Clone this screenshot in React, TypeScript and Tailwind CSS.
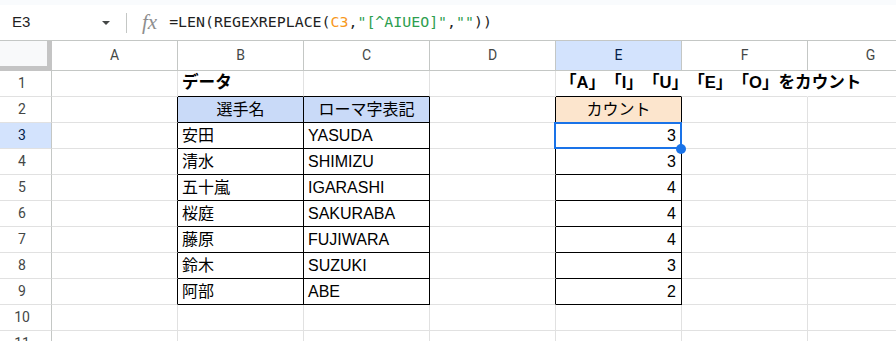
import React from 'react';

const COLS = ['A', 'B', 'C', 'D', 'E', 'F', 'G'];

type Cell = {
  text?: string;
  bold?: boolean;
  align?: 'left' | 'center' | 'right';
  fill?: string;
};

const players: [string, string, string][] = [
  ['安田', 'YASUDA', '3'],
  ['清水', 'SHIMIZU', '3'],
  ['五十嵐', 'IGARASHI', '4'],
  ['桜庭', 'SAKURABA', '4'],
  ['藤原', 'FUJIWARA', '4'],
  ['鈴木', 'SUZUKI', '3'],
  ['阿部', 'ABE', '2'],
];

const rows: Cell[][] = [
  [{}, { text: 'データ', bold: true }, {}, {}, { text: '「A」「I」「U」「E」「O」をカウント', bold: true }, {}, {}],
  [
    {},
    { text: '選手名', align: 'center', fill: 'bg-[#c9daf8]' },
    { text: 'ローマ字表記', align: 'center', fill: 'bg-[#c9daf8]' },
    {},
    { text: 'カウント', align: 'center', fill: 'bg-[#fce5cd]' },
    {},
    {},
  ],
  ...players.map(([name, roman, n]) => [
    {},
    { text: name },
    { text: roman },
    {},
    { text: n, align: 'right' as const },
    {},
    {},
  ]),
  [{}, {}, {}, {}, {}, {}, {}],
  [{}, {}, {}, {}, {}, {}, {}],
];

const inTable = (r: number, c: number) => r >= 2 && r <= 9 && (c === 1 || c === 2 || c === 4);

function borderClasses(r: number, c: number) {
  let right = 'border-r-[#e1e1e1]';
  if (inTable(r, c) || inTable(r, c + 1)) right = 'border-r-black';
  else if (r === 1 && (c === 4 || c === 5)) right = 'border-r-transparent';
  const bottom = inTable(r, c) || inTable(r + 1, c) ? 'border-b-black' : 'border-b-[#e1e1e1]';
  return `${right} ${bottom}`;
}

const alignClass = {
  left: 'justify-start pl-[4px]',
  center: 'justify-center',
  right: 'justify-end pr-[5px]',
};

export default function App() {
  return (
    <div className="w-[896px] h-[341px] overflow-hidden bg-white font-['Liberation_Sans','Noto_Sans_CJK_JP',sans-serif] [text-spacing-trim:space-all]">
      <div className="h-[5px] bg-[#f9fbfd]" />

      {/* formula bar */}
      <div className="flex h-[36px] items-center border-b border-[#c4c7c5]">
        <div className="flex w-[126px] items-center justify-between pl-[12px] pr-[16px]">
          <span className="text-[15px] text-[#1f1f1f]">E3</span>
          <svg width="8" height="4" viewBox="0 0 8 4">
            <path d="M0 0h8L4 4z" fill="#444746" />
          </svg>
        </div>
        <div className="h-[20px] w-px bg-[#c4c7c5]" />
        <span className="ml-[15px] font-['Liberation_Serif',serif] text-[21px] italic leading-none text-[#8e8e8e]">
          fx
        </span>
        <span className="ml-[12px] whitespace-nowrap font-['DejaVu_Sans_Mono',monospace] text-[14.9px] text-[#1f1f1f]">
          =LEN(REGEXREPLACE(<span className="text-[#f7981d]">C3</span>,
          <span className="text-[#2e9e4f]">"[^AIUEO]"</span>,
          <span className="text-[#2e9e4f]">""</span>))
        </span>
      </div>

      {/* column headers */}
      <div className="flex h-[30px] font-['Roboto',sans-serif] text-[14px] text-[#444746]">
        <div className="w-[52px] shrink-0 border-r-[5px] border-b-[5px] border-[#c4c4c4] bg-[#f8f9fa]" />
        {COLS.map((c) => (
          <div
            key={c}
            className={`flex w-[126px] shrink-0 items-center justify-center border-r border-b border-[#c4c7c5] ${
              c === 'E' ? 'bg-[#d3e3fd] text-[#041e49]' : ''
            }`}
          >
            {c}
          </div>
        ))}
      </div>

      {/* grid */}
      {rows.map((row, r) => {
        const rowNum = r + 1;
        return (
          <div key={r} className="flex h-[26px]">
            <div
              className={`flex w-[52px] shrink-0 items-center justify-center pr-[7px] border-r border-b border-r-[#c4c7c5] border-b-[#e1e1e1] font-['Roboto',sans-serif] text-[14px] ${
                rowNum === 3 ? 'bg-[#d3e3fd] text-[#041e49]' : 'text-[#444746]'
              }`}
            >
              {rowNum}
            </div>
            {row.map((cell, c) => (
              <div
                key={c}
                className={`relative flex w-[126px] shrink-0 items-center whitespace-nowrap border-r border-b text-black ${borderClasses(
                  rowNum,
                  c,
                )} ${alignClass[cell.align ?? 'left']} ${cell.fill ?? ''} ${
                  cell.bold ? 'text-[16.6px] font-bold' : 'text-[16px]'
                } ${rowNum === 1 && c === 4 ? 'z-10' : ''}`}
              >
                {cell.text}
                {rowNum === 3 && c === 4 && (
                  <>
                    <div className="absolute -left-[2px] -top-[1px] -right-[1px] -bottom-[1px] border-2 border-[#1a73e8]" />
                    <div className="absolute -right-[5px] -bottom-[6px] z-20 h-[10px] w-[10px] rounded-full bg-[#1a73e8]" />
                  </>
                )}
              </div>
            ))}
          </div>
        );
      })}
    </div>
  );
}
